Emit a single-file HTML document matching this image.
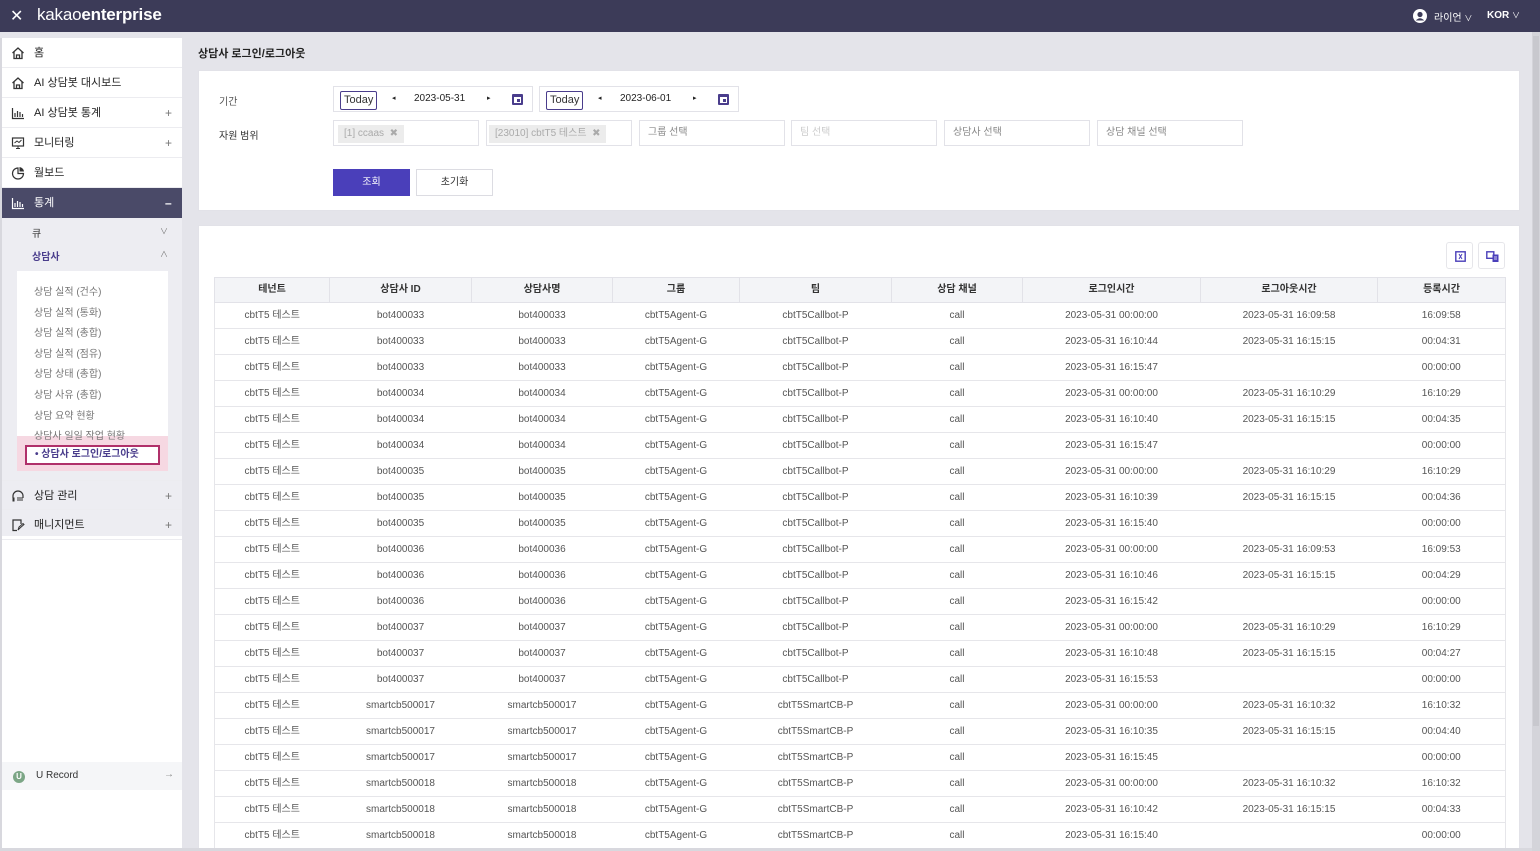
<!DOCTYPE html>
<html style="width:1540px;height:851px;overflow:hidden"><head><meta charset="utf-8">
<style>
*{box-sizing:border-box;margin:0;padding:0}
body{width:1540px;height:851px;overflow:hidden;background:#e4e4ea;font-family:"Liberation Sans","Noto Sans CJK KR",sans-serif;color:#333;position:relative;font-size:11px}
.abs{position:absolute}
#hdr{left:0;top:0;width:1540px;height:32px;background:#3c3b58}
#side{left:0;top:38px;width:182px;height:813px;background:#fff;border-left:2px solid #d8d8de}
.mi{position:absolute;left:0;width:180px;height:30px;border-bottom:1px solid #ececf0;font-size:11px;color:#222;line-height:30px}
.mi .ic{position:absolute;left:9px;top:8px;width:14px;height:14px}
.mi .t{position:absolute;left:32px}
.mi .pl{position:absolute;left:163px;color:#777;font-size:12px}
.sub{position:absolute;left:32px;font-size:10px;color:#777}
.box{background:#fff;border:1px solid #e2e2e8}
.inp{position:absolute;height:26px;border:1px solid #e2e2e8;background:#fff;font-size:10px;color:#999;line-height:24px;padding-left:8px}
.tag{position:absolute;top:4px;height:18px;background:#ececec;color:#aaa;line-height:18px;padding:0 6px;font-size:10px}
table{border-collapse:collapse;position:absolute;left:214px;top:277px;width:1291px;table-layout:fixed}
td,th{border-bottom:1px solid #e6e6ea;height:26px;line-height:14px;vertical-align:middle;text-align:center;font-size:10px;color:#555;font-weight:normal;white-space:nowrap;overflow:hidden;padding:0}
th{background:#f3f4f7;color:#333;font-weight:bold;border:1px solid #e2e2e8;height:25px}
tr td:first-child{border-left:1px solid #e6e6ea}
tr td:last-child{border-right:1px solid #e6e6ea}
</style></head><body>
<div id="hdr" class="abs">
 <div class="abs" style="left:10px;top:6px;color:#fff;font-size:16px">✕</div>
 <div class="abs" style="left:37px;top:5px;color:#fff;font-size:17px;letter-spacing:-0.2px">kakao<b>enterprise</b></div>
 <svg class="abs" style="left:1413px;top:9px" width="14" height="14" viewBox="0 0 14 14"><circle cx="7" cy="7" r="7" fill="#fff"/><circle cx="7" cy="5.5" r="2.6" fill="#3c3b58"/><path d="M2.8 11.5 Q7 7 11.2 11.5" fill="#3c3b58"/></svg>
 <div class="abs" style="left:1434px;top:9px;color:#fff;font-size:10px">라이언 <span style="font-size:8px">∨</span></div>
 <div class="abs" style="left:1487px;top:10px;color:#fff;font-size:10px;font-weight:bold">KOR <span style="font-weight:normal;font-size:8px">∨</span></div>
</div>
<div class="abs" style="left:1532px;top:32px;width:8px;height:819px;background:#d4d4da"></div>
<div class="abs" style="left:1533px;top:36px;width:6px;height:690px;background:#c8c8ce"></div>

<div id="side" class="abs">
 <div class="mi" style="top:0"><svg class="ic" viewBox="0 0 14 14"><path d="M1.5 7 L7 2 L12.5 7 M3 6 V12.5 H11 V6 M5.5 12.5 V9 H8.5 V12.5" fill="none" stroke="#333" stroke-width="1.3"/></svg><span class="t">홈</span></div>
 <div class="mi" style="top:30px"><svg class="ic" viewBox="0 0 14 14"><path d="M1.5 7 L7 2 L12.5 7 M3 6 V12.5 H11 V6 M5.5 12.5 V9 H8.5 V12.5" fill="none" stroke="#333" stroke-width="1.3"/></svg><span class="t">AI 상담봇 대시보드</span></div>
 <div class="mi" style="top:60px"><svg class="ic" viewBox="0 0 14 14"><path d="M1.5 2 V12.5 H13 M4 11 V7 M6.5 11 V5 M9 11 V6 M11.5 11 V8" fill="none" stroke="#333" stroke-width="1.2"/></svg><span class="t">AI 상담봇 통계</span><span class="pl">+</span></div>
 <div class="mi" style="top:90px"><svg class="ic" viewBox="0 0 14 14"><rect x="1.5" y="2" width="11" height="8" fill="none" stroke="#333" stroke-width="1.2"/><path d="M5 12.5 H9 M7 10 V12.5 M3.5 7 L6 5 L8 6.5 L10.5 4" fill="none" stroke="#333" stroke-width="1"/></svg><span class="t">모니터링</span><span class="pl">+</span></div>
 <div class="mi" style="top:120px"><svg class="ic" viewBox="0 0 14 14"><path d="M7 2 A5.5 5.5 0 1 0 12.5 7.5 H7 Z" fill="none" stroke="#333" stroke-width="1.2"/><path d="M8.5 1 A5 5 0 0 1 13 5.5 H8.5 Z" fill="#333"/></svg><span class="t">월보드</span></div>
 <div class="mi" style="top:150px;background:#4a4a68;color:#fff;border:none"><svg class="ic" viewBox="0 0 14 14"><path d="M1.5 2 V12.5 H13 M4 11 V7 M6.5 11 V5 M9 11 V6 M11.5 11 V8" fill="none" stroke="#fff" stroke-width="1.2"/></svg><span class="t">통계</span><span class="pl" style="color:#fff;font-weight:bold">–</span></div>
 <div class="abs" style="left:0;top:180px;width:180px;height:318px;background:#ededf2"></div>
 <div class="abs" style="left:30px;top:187px;font-size:10px;color:#333">큐</div><div class="abs" style="left:158px;top:188px;color:#777;font-size:8px">∨</div>
 <div class="abs" style="left:30px;top:210px;font-size:10px;color:#4a3d8c;font-weight:bold">상담사</div><div class="abs" style="left:158px;top:211px;color:#777;font-size:8px">∧</div>
 <div class="abs" style="left:15px;top:233px;width:151px;height:200px;background:#fff"></div>
 <div class="abs" style="left:15px;top:398px;width:151px;height:35px;background:#f6d8e2"></div>
 <div class="sub" style="top:245px">상담 실적 (건수)</div>
 <div class="sub" style="top:266px">상담 실적 (통화)</div>
 <div class="sub" style="top:286px">상담 실적 (총합)</div>
 <div class="sub" style="top:307px">상담 실적 (점유)</div>
 <div class="sub" style="top:327px">상담 상태 (총합)</div>
 <div class="sub" style="top:348px">상담 사유 (총합)</div>
 <div class="sub" style="top:369px">상담 요약 현황</div>
 <div class="sub" style="top:389px">상담사 일일 작업 현황</div>
 <div class="abs" style="left:23px;top:407px;width:135px;height:20px;border:2px solid #b0306a;background:#fff;font-size:10px;color:#4a3d8c;font-weight:bold;line-height:16px;padding-left:8px">• 상담사 로그인/로그아웃</div>
 <div class="mi" style="top:442px;border-top:1px solid #ececf0"><svg class="ic" viewBox="0 0 14 14"><path d="M2 9 V7 A5 5 0 0 1 12 7 V9" fill="none" stroke="#333" stroke-width="1.2"/><rect x="1.5" y="8.5" width="2" height="4" fill="#333"/><path d="M6 9 H12 M6 11 H12" stroke="#333"/></svg><span class="t">상담 관리</span><span class="pl">+</span></div>
 <div class="mi" style="top:472px"><svg class="ic" viewBox="0 0 14 14"><path d="M10 6 V2 H2 V12.5 H6" fill="none" stroke="#333" stroke-width="1.2"/><path d="M7 12 L8 9 L12 5.5 L13 6.5 L9 10 Z" fill="none" stroke="#333"/></svg><span class="t">매니지먼트</span><span class="pl">+</span></div>
 <div class="abs" style="left:0;top:724px;width:180px;height:28px;background:#f5f6f8"></div>
 <div class="abs" style="left:11px;top:733px;width:12px;height:12px;border-radius:50%;background:#7ca686;color:#fff;font-size:8px;text-align:center;line-height:12px;font-weight:bold">U</div>
 <div class="abs" style="left:34px;top:732px;font-size:10px;color:#333">U Record</div>
 <div class="abs" style="left:162px;top:731px;font-size:10px;color:#888">→</div>
</div>

<div class="abs" style="left:198px;top:45px;font-size:11px;font-weight:bold;color:#222">상담사 로그인/로그아웃</div>

<div class="abs box" style="left:198px;top:70px;width:1322px;height:141px">
 <div class="abs" style="left:20px;top:22px;font-size:10px;color:#555">기간</div>
 <div class="abs" style="left:20px;top:56px;font-size:10px;color:#333">자원 범위</div>
 <div class="inp" style="left:134px;top:15px;width:200px;color:#222">
  <div class="abs" style="left:6px;top:4px;border:1px solid #4a3d8c;border-radius:2px;height:19px;line-height:17px;padding:0 3px;font-size:11px;color:#333">Today</div>
  <div class="abs" style="left:58px;top:0;font-size:7px">◂</div>
  <div class="abs" style="left:80px;top:0;font-size:10px">2023-05-31</div>
  <div class="abs" style="left:153px;top:0;font-size:7px">▸</div>
  <div class="abs" style="left:178px;top:7px;width:11px;height:11px;border:2px solid #4a3d8c;border-top-width:3px;border-radius:1px"><div style="position:absolute;right:1px;bottom:1px;width:3px;height:3px;background:#4a3d8c"></div></div>
 </div>
 <div class="inp" style="left:340px;top:15px;width:200px;color:#222">
  <div class="abs" style="left:6px;top:4px;border:1px solid #4a3d8c;border-radius:2px;height:19px;line-height:17px;padding:0 3px;font-size:11px;color:#333">Today</div>
  <div class="abs" style="left:58px;top:0;font-size:7px">◂</div>
  <div class="abs" style="left:80px;top:0;font-size:10px">2023-06-01</div>
  <div class="abs" style="left:153px;top:0;font-size:7px">▸</div>
  <div class="abs" style="left:178px;top:7px;width:11px;height:11px;border:2px solid #4a3d8c;border-top-width:3px;border-radius:1px"><div style="position:absolute;right:1px;bottom:1px;width:3px;height:3px;background:#4a3d8c"></div></div>
 </div>
 <div class="inp" style="left:134px;top:49px;width:146px"><div class="tag" style="left:4px">[1] ccaas &nbsp;✖</div></div>
 <div class="inp" style="left:287px;top:49px;width:146px"><div class="tag" style="left:2px">[23010] cbtT5 테스트 &nbsp;✖</div></div>
 <div class="inp" style="left:440px;top:49px;width:146px;color:#888">그룹 선택</div>
 <div class="inp" style="left:592px;top:49px;width:146px;color:#ccc">팀 선택</div>
 <div class="inp" style="left:745px;top:49px;width:146px;color:#888">상담사 선택</div>
 <div class="inp" style="left:898px;top:49px;width:146px;color:#888">상담 채널 선택</div>
 <div class="abs" style="left:134px;top:98px;width:77px;height:27px;background:#4a3fba;color:#fff;font-size:10px;text-align:center;line-height:27px">조회</div>
 <div class="abs" style="left:217px;top:98px;width:77px;height:27px;background:#fff;border:1px solid #dcdce2;color:#333;font-size:10px;text-align:center;line-height:25px">초기화</div>
</div>

<div class="abs box" style="left:198px;top:225px;width:1322px;height:626px;border-bottom:none">
 <div class="abs" style="left:1247px;top:16px;width:27px;height:27px;border:1px solid #e6e6ea;border-radius:3px"><svg style="position:absolute;left:8px;top:8px" width="11" height="11" viewBox="0 0 11 11"><rect x="0.8" y="0.8" width="9.4" height="9.4" fill="none" stroke="#4a3fba" stroke-width="1.4"/><path d="M4 3 L7 8 M7 3 L4 8" stroke="#4a3fba"/></svg></div>
 <div class="abs" style="left:1279px;top:16px;width:27px;height:27px;border:1px solid #e6e6ea;border-radius:3px"><svg style="position:absolute;left:7px;top:8px" width="13" height="11" viewBox="0 0 13 11"><rect x="0.8" y="0.8" width="7" height="6.5" fill="none" stroke="#4a3fba" stroke-width="1.4"/><rect x="6.5" y="3.5" width="6" height="7.5" fill="#4a3fba"/><path d="M8 6 H11 M8 8 H11" stroke="#fff" stroke-width="0.8"/></svg></div>
</div>

<table>
<colgroup><col style="width:115px"><col style="width:142px"><col style="width:141px"><col style="width:127px"><col style="width:152px"><col style="width:131px"><col style="width:178px"><col style="width:177px"><col style="width:128px"></colgroup>
<tr><th>테넌트</th><th>상담사 ID</th><th>상담사명</th><th>그룹</th><th>팀</th><th>상담 채널</th><th>로그인시간</th><th>로그아웃시간</th><th>등록시간</th></tr>
<tr><td>cbtT5 테스트</td><td>bot400033</td><td>bot400033</td><td>cbtT5Agent-G</td><td>cbtT5Callbot-P</td><td>call</td><td>2023-05-31 00:00:00</td><td>2023-05-31 16:09:58</td><td>16:09:58</td></tr>
<tr><td>cbtT5 테스트</td><td>bot400033</td><td>bot400033</td><td>cbtT5Agent-G</td><td>cbtT5Callbot-P</td><td>call</td><td>2023-05-31 16:10:44</td><td>2023-05-31 16:15:15</td><td>00:04:31</td></tr>
<tr><td>cbtT5 테스트</td><td>bot400033</td><td>bot400033</td><td>cbtT5Agent-G</td><td>cbtT5Callbot-P</td><td>call</td><td>2023-05-31 16:15:47</td><td></td><td>00:00:00</td></tr>
<tr><td>cbtT5 테스트</td><td>bot400034</td><td>bot400034</td><td>cbtT5Agent-G</td><td>cbtT5Callbot-P</td><td>call</td><td>2023-05-31 00:00:00</td><td>2023-05-31 16:10:29</td><td>16:10:29</td></tr>
<tr><td>cbtT5 테스트</td><td>bot400034</td><td>bot400034</td><td>cbtT5Agent-G</td><td>cbtT5Callbot-P</td><td>call</td><td>2023-05-31 16:10:40</td><td>2023-05-31 16:15:15</td><td>00:04:35</td></tr>
<tr><td>cbtT5 테스트</td><td>bot400034</td><td>bot400034</td><td>cbtT5Agent-G</td><td>cbtT5Callbot-P</td><td>call</td><td>2023-05-31 16:15:47</td><td></td><td>00:00:00</td></tr>
<tr><td>cbtT5 테스트</td><td>bot400035</td><td>bot400035</td><td>cbtT5Agent-G</td><td>cbtT5Callbot-P</td><td>call</td><td>2023-05-31 00:00:00</td><td>2023-05-31 16:10:29</td><td>16:10:29</td></tr>
<tr><td>cbtT5 테스트</td><td>bot400035</td><td>bot400035</td><td>cbtT5Agent-G</td><td>cbtT5Callbot-P</td><td>call</td><td>2023-05-31 16:10:39</td><td>2023-05-31 16:15:15</td><td>00:04:36</td></tr>
<tr><td>cbtT5 테스트</td><td>bot400035</td><td>bot400035</td><td>cbtT5Agent-G</td><td>cbtT5Callbot-P</td><td>call</td><td>2023-05-31 16:15:40</td><td></td><td>00:00:00</td></tr>
<tr><td>cbtT5 테스트</td><td>bot400036</td><td>bot400036</td><td>cbtT5Agent-G</td><td>cbtT5Callbot-P</td><td>call</td><td>2023-05-31 00:00:00</td><td>2023-05-31 16:09:53</td><td>16:09:53</td></tr>
<tr><td>cbtT5 테스트</td><td>bot400036</td><td>bot400036</td><td>cbtT5Agent-G</td><td>cbtT5Callbot-P</td><td>call</td><td>2023-05-31 16:10:46</td><td>2023-05-31 16:15:15</td><td>00:04:29</td></tr>
<tr><td>cbtT5 테스트</td><td>bot400036</td><td>bot400036</td><td>cbtT5Agent-G</td><td>cbtT5Callbot-P</td><td>call</td><td>2023-05-31 16:15:42</td><td></td><td>00:00:00</td></tr>
<tr><td>cbtT5 테스트</td><td>bot400037</td><td>bot400037</td><td>cbtT5Agent-G</td><td>cbtT5Callbot-P</td><td>call</td><td>2023-05-31 00:00:00</td><td>2023-05-31 16:10:29</td><td>16:10:29</td></tr>
<tr><td>cbtT5 테스트</td><td>bot400037</td><td>bot400037</td><td>cbtT5Agent-G</td><td>cbtT5Callbot-P</td><td>call</td><td>2023-05-31 16:10:48</td><td>2023-05-31 16:15:15</td><td>00:04:27</td></tr>
<tr><td>cbtT5 테스트</td><td>bot400037</td><td>bot400037</td><td>cbtT5Agent-G</td><td>cbtT5Callbot-P</td><td>call</td><td>2023-05-31 16:15:53</td><td></td><td>00:00:00</td></tr>
<tr><td>cbtT5 테스트</td><td>smartcb500017</td><td>smartcb500017</td><td>cbtT5Agent-G</td><td>cbtT5SmartCB-P</td><td>call</td><td>2023-05-31 00:00:00</td><td>2023-05-31 16:10:32</td><td>16:10:32</td></tr>
<tr><td>cbtT5 테스트</td><td>smartcb500017</td><td>smartcb500017</td><td>cbtT5Agent-G</td><td>cbtT5SmartCB-P</td><td>call</td><td>2023-05-31 16:10:35</td><td>2023-05-31 16:15:15</td><td>00:04:40</td></tr>
<tr><td>cbtT5 테스트</td><td>smartcb500017</td><td>smartcb500017</td><td>cbtT5Agent-G</td><td>cbtT5SmartCB-P</td><td>call</td><td>2023-05-31 16:15:45</td><td></td><td>00:00:00</td></tr>
<tr><td>cbtT5 테스트</td><td>smartcb500018</td><td>smartcb500018</td><td>cbtT5Agent-G</td><td>cbtT5SmartCB-P</td><td>call</td><td>2023-05-31 00:00:00</td><td>2023-05-31 16:10:32</td><td>16:10:32</td></tr>
<tr><td>cbtT5 테스트</td><td>smartcb500018</td><td>smartcb500018</td><td>cbtT5Agent-G</td><td>cbtT5SmartCB-P</td><td>call</td><td>2023-05-31 16:10:42</td><td>2023-05-31 16:15:15</td><td>00:04:33</td></tr>
<tr><td>cbtT5 테스트</td><td>smartcb500018</td><td>smartcb500018</td><td>cbtT5Agent-G</td><td>cbtT5SmartCB-P</td><td>call</td><td>2023-05-31 16:15:40</td><td></td><td>00:00:00</td></tr>
</table>
<div class="abs" style="left:0;top:848px;width:1532px;height:3px;background:#d8d8de"></div>
</body></html>
